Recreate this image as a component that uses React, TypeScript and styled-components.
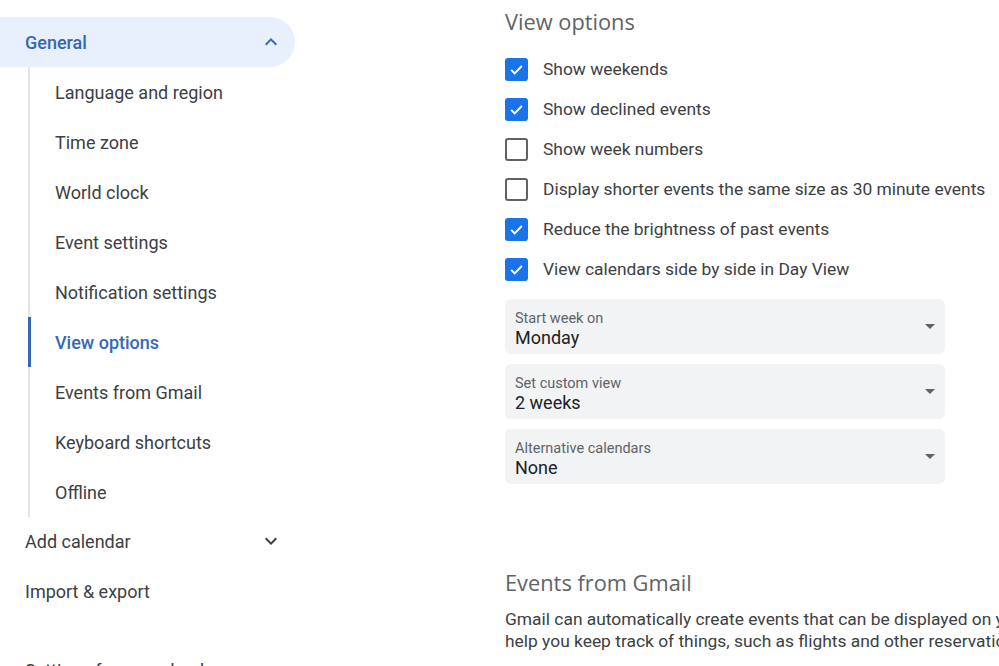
import React from "react";
import styled, { createGlobalStyle } from "styled-components";

const GlobalStyle = createGlobalStyle`
  html, body {
    margin: 0;
    padding: 0;
    background: #ffffff;
    overflow: hidden;
  }
  body {
    font-family: Roboto, "Liberation Sans", Arial, sans-serif;
    color: #3c4043;
  }
`;

const Page = styled.div`
  width: 999px;
  height: 666px;
  overflow: hidden;
  display: grid;
  grid-template-columns: 295px 1fr;
`;

const Sidebar = styled.nav`
  padding-top: 17px;
  display: flex;
  flex-direction: column;
`;

const TopItem = styled.div<{ $active?: boolean }>`
  height: 50px;
  flex-shrink: 0;
  display: flex;
  align-items: center;
  justify-content: space-between;
  padding: 0 12px 0 25px;
  border-radius: 0 25px 25px 0;
  background: ${({ $active }) => ($active ? "#e8f0fe" : "transparent")};
  color: ${({ $active }) => ($active ? "#3468b5" : "#3c4043")};
  font-size: 18px;
  font-weight: ${({ $active }) => ($active ? 500 : 400)};
`;

const SubList = styled.div`
  margin: 0 0 -1px 28px;
  padding-top: 4px;
  border-left: 2px solid #e3e4e6;
  display: flex;
  flex-direction: column;
`;

const SubItem = styled.div<{ $active?: boolean }>`
  height: 50px;
  flex-shrink: 0;
  display: flex;
  align-items: center;
  padding-left: 24px;
  margin-left: -2px;
  border-left: 3px solid ${({ $active }) => ($active ? "#3468b5" : "transparent")};
  font-size: 18px;
  color: ${({ $active }) => ($active ? "#3468b5" : "#3c4043")};
  font-weight: ${({ $active }) => ($active ? 500 : 400)};

  &:first-child {
    margin-top: -4px;
  }
`;

const Spacer = styled.div`
  height: 29px;
  flex-shrink: 0;
`;

const Main = styled.main`
  padding: 7px 0 0 210px;
  display: flex;
  flex-direction: column;
`;

const Heading = styled.h2`
  margin: 0;
  font-family: "Open Sans", Roboto, sans-serif;
  font-weight: 400;
  font-size: 21.8px;
  line-height: 30px;
  color: #5f6368;
`;

const OptionList = styled.div`
  margin-top: 12px;
  display: flex;
  flex-direction: column;
`;

const OptionRow = styled.label`
  height: 40px;
  display: flex;
  align-items: center;
  gap: 15px;
  font-size: 17.4px;
  color: #3c4043;
  white-space: nowrap;
`;

const Box = styled.span<{ $checked: boolean }>`
  width: 23px;
  height: 23px;
  box-sizing: border-box;
  border-radius: 3px;
  display: flex;
  align-items: center;
  justify-content: center;
  background: ${({ $checked }) => ($checked ? "#1a73e8" : "#ffffff")};
  border: ${({ $checked }) => ($checked ? "none" : "2px solid #5f6368")};
  flex-shrink: 0;
`;

const Selects = styled.div`
  margin-top: 10px;
  width: 440px;
  display: flex;
  flex-direction: column;
  gap: 10px;
`;

const SelectBox = styled.div`
  height: 55px;
  box-sizing: border-box;
  border-radius: 6px;
  background: #f1f3f4;
  display: flex;
  align-items: center;
  justify-content: space-between;
  padding: 5px 10px 0;
`;

const SelectText = styled.div`
  display: flex;
  flex-direction: column;
`;

const SelectLabel = styled.span`
  font-size: 14.5px;
  line-height: 17px;
  color: #5f6368;
`;

const SelectValue = styled.span`
  font-size: 18px;
  line-height: 22px;
  color: #202124;
`;

const Caret = styled.span`
  width: 0;
  height: 0;
  margin-top: -5px;
  border-left: 5px solid transparent;
  border-right: 5px solid transparent;
  border-top: 5px solid #5f6368;
`;

const GmailSection = styled.section`
  margin-top: 84px;
`;

const Paragraph = styled.p`
  margin: 10px 0 0;
  font-size: 17.4px;
  line-height: 22px;
  color: #3c4043;
  white-space: nowrap;
`;

const Chevron = ({ up, color }: { up?: boolean; color: string }) => (
  <svg width="24" height="24" viewBox="0 0 24 24">
    <path
      d={up ? "M7.4 15.4 12 10.8l4.6 4.6L18 14l-6-6-6 6z" : "M7.4 8.6 12 13.2l4.6-4.6L18 10l-6 6-6-6z"}
      fill={color}
    />
  </svg>
);

const Check = () => (
  <svg width="17" height="17" viewBox="0 0 24 24">
    <path d="M4.5 12.5l5 5L19.5 7" fill="none" stroke="#ffffff" strokeWidth="2.8" />
  </svg>
);

const subItems = [
  "Language and region",
  "Time zone",
  "World clock",
  "Event settings",
  "Notification settings",
  "View options",
  "Events from Gmail",
  "Keyboard shortcuts",
  "Offline",
];

const options = [
  { label: "Show weekends", checked: true },
  { label: "Show declined events", checked: true },
  { label: "Show week numbers", checked: false },
  { label: "Display shorter events the same size as 30 minute events", checked: false },
  { label: "Reduce the brightness of past events", checked: true },
  { label: "View calendars side by side in Day View", checked: true },
];

const selects = [
  { label: "Start week on", value: "Monday" },
  { label: "Set custom view", value: "2 weeks" },
  { label: "Alternative calendars", value: "None" },
];

export default function App() {
  return (
    <>
      <GlobalStyle />
      <Page>
        <Sidebar>
          <TopItem $active>
            General
            <Chevron up color="#3468b5" />
          </TopItem>
          <SubList>
            {subItems.map((s) => (
              <SubItem key={s} $active={s === "View options"}>
                {s}
              </SubItem>
            ))}
          </SubList>
          <TopItem>
            Add calendar
            <Chevron color="#3c4043" />
          </TopItem>
          <TopItem>Import &amp; export</TopItem>
          <Spacer />
          <TopItem>Settings for my calendars</TopItem>
        </Sidebar>
        <Main>
          <Heading>View options</Heading>
          <OptionList>
            {options.map((o) => (
              <OptionRow key={o.label}>
                <Box $checked={o.checked}>{o.checked && <Check />}</Box>
                {o.label}
              </OptionRow>
            ))}
          </OptionList>
          <Selects>
            {selects.map((s) => (
              <SelectBox key={s.label}>
                <SelectText>
                  <SelectLabel>{s.label}</SelectLabel>
                  <SelectValue>{s.value}</SelectValue>
                </SelectText>
                <Caret />
              </SelectBox>
            ))}
          </Selects>
          <GmailSection>
            <Heading>Events from Gmail</Heading>
            <Paragraph>
              Gmail can automatically create events that can be displayed on your calendar to
              <br />
              help you keep track of things, such as flights and other reservations.
            </Paragraph>
          </GmailSection>
        </Main>
      </Page>
    </>
  );
}
